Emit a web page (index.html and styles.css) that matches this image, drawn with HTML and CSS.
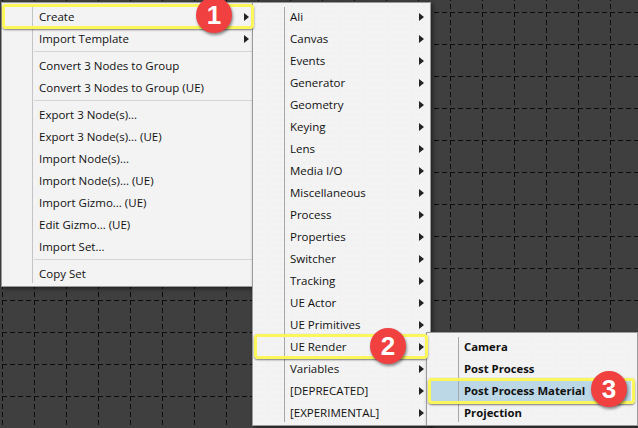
FILE: index.html
```html
<!DOCTYPE html>
<html lang="en">
  <head>
    <meta charset="UTF-8" />
    <title>Create menu</title>
    <link rel="stylesheet" href="styles.css">
  </head>
  <body>
    <div class="canvas">
      <!-- node graph grid -->
      <svg class="grid" width="638" height="428">
        <defs>
          <pattern id="grid-cell" x="2" y="12" width="32" height="32" patternUnits="userSpaceOnUse">
            <path d="M0 0.5H32M0.5 0V32" stroke="#0c0c0c" stroke-width="1" stroke-dasharray="5 3" fill="none" />
          </pattern>
        </defs>
        <rect width="638" height="428" fill="url(#grid-cell)" />
      </svg>

      <div class="menu menu-main">
        <div class="row has-sub">Create</div>
        <div class="row has-sub">Import Template</div>
        <div class="sep"></div>
        <div class="row">Convert 3 Nodes to Group</div>
        <div class="row">Convert 3 Nodes to Group (UE)</div>
        <div class="sep"></div>
        <div class="row">Export 3 Node(s)...</div>
        <div class="row">Export 3 Node(s)... (UE)</div>
        <div class="row">Import Node(s)...</div>
        <div class="row">Import Node(s)... (UE)</div>
        <div class="row">Import Gizmo... (UE)</div>
        <div class="row">Edit Gizmo... (UE)</div>
        <div class="row">Import Set...</div>
        <div class="sep"></div>
        <div class="row">Copy Set</div>
      </div>

      <div class="menu menu-create">
        <div class="row has-sub">Ali</div>
        <div class="row has-sub">Canvas</div>
        <div class="row has-sub">Events</div>
        <div class="row has-sub">Generator</div>
        <div class="row has-sub">Geometry</div>
        <div class="row has-sub">Keying</div>
        <div class="row has-sub">Lens</div>
        <div class="row has-sub">Media I/O</div>
        <div class="row has-sub">Miscellaneous</div>
        <div class="row has-sub">Process</div>
        <div class="row has-sub">Properties</div>
        <div class="row has-sub">Switcher</div>
        <div class="row has-sub">Tracking</div>
        <div class="row has-sub">UE Actor</div>
        <div class="row has-sub">UE Primitives</div>
        <div class="row has-sub">UE Render</div>
        <div class="row has-sub">Variables</div>
        <div class="row has-sub">[DEPRECATED]</div>
        <div class="row has-sub">[EXPERIMENTAL]</div>
      </div>

      <div class="menu menu-render">
        <div class="row">Camera</div>
        <div class="row">Post Process</div>
        <div class="row active">Post Process Material</div>
        <div class="row">Projection</div>
      </div>

      <div class="callout callout-1"></div>
      <div class="callout callout-2"></div>
      <div class="callout callout-3"></div>
      <div class="badge badge-1">1</div>
      <div class="badge badge-2">2</div>
      <div class="badge badge-3">3</div>
    </div>
  </body>
</html>
```

FILE: styles.css
```css
body {
  margin: 0;
  background: #3f3f3f;
  font-family: "Open Sans", "Noto Sans", sans-serif;
  font-size: 11.5px;
  color: #111;
}

.canvas {
  position: relative;
  width: 638px;
  height: 428px;
  overflow: hidden;
  background: #3f3f3f;
}

.grid {
  position: absolute;
  top: 0;
  left: 0;
}

.menu {
  position: absolute;
  box-sizing: border-box;
  display: flex;
  flex-direction: column;
  padding-top: 3px;
  background-color: #f3f3f3;
  border: 1px solid #9a9a9a;
  box-shadow: 2px 2px 4px rgba(0, 0, 0, 0.45);
}

/* vertical line between the icon gutter and the labels */
.menu::before {
  content: "";
  position: absolute;
  top: 4px;
  bottom: 3px;
  width: 1px;
  background: #c4c4c4;
}

.menu-main {
  left: 1px;
  top: 2px;
  width: 252px;
  height: 285px;
}

.menu-main::before {
  left: 30px;
}

.menu-main .row.has-sub::after {
  right: 3px;
}

.menu-create,
.menu-render {
  background-image: radial-gradient(#ebebeb 0.6px, transparent 0.8px);
  background-size: 6px 6px;
}

.menu-create {
  left: 252px;
  top: 2px;
  width: 179px;
  height: 424px;
  z-index: 1;
}

.menu-render {
  left: 426px;
  top: 332px;
  width: 212px;
  height: 94px;
  font-size: 11.3px;
  font-weight: 700;
  z-index: 2;
}

.menu-create::before,
.menu-render::before {
  left: 31px;
  background: #a8a8a8;
}

.row {
  position: relative;
  flex: none;
  box-sizing: border-box;
  display: flex;
  align-items: center;
  height: 22px;
  padding: 0 0 1px 37px;
  white-space: nowrap;
}

.row.has-sub::after {
  content: "";
  position: absolute;
  right: 6px;
  top: 7px;
  border-left: 5px solid #222;
  border-top: 4px solid transparent;
  border-bottom: 4px solid transparent;
}

.row.active {
  margin: 0 6px 0 4px;
  padding-left: 33px;
  background: #bcd7e6;
}

.row.active::before {
  content: "";
  position: absolute;
  left: 27px;
  top: 0;
  bottom: 0;
  width: 1px;
  background: #a8a8a8;
}

.sep {
  flex: none;
  height: 1px;
  margin: 1px 0 3px 32px;
  background: #d4d4d4;
}

.callout {
  position: absolute;
  box-sizing: border-box;
  border: 3px solid #fbf75a;
  border-radius: 4px;
  box-shadow: 0 1px 2px rgba(0, 0, 0, 0.5);
  z-index: 3;
}

.callout-1 {
  left: 2px;
  top: 4px;
  width: 252px;
  height: 25px;
}

.callout-2 {
  left: 254px;
  top: 334px;
  width: 174px;
  height: 25px;
}

.callout-3 {
  left: 428px;
  top: 378px;
  width: 207px;
  height: 26px;
}

.badge {
  position: absolute;
  width: 36px;
  height: 36px;
  border-radius: 50%;
  background: #f04040;
  color: #fff;
  font-family: "Liberation Sans", sans-serif;
  font-size: 26px;
  font-weight: 700;
  line-height: 36px;
  text-align: center;
  box-shadow: 1px 2px 3px rgba(0, 0, 0, 0.45);
  z-index: 4;
}

.badge-1 {
  left: 196px;
  top: -3px;
}

.badge-2 {
  left: 370px;
  top: 328px;
}

.badge-3 {
  left: 591px;
  top: 371px;
}
```
